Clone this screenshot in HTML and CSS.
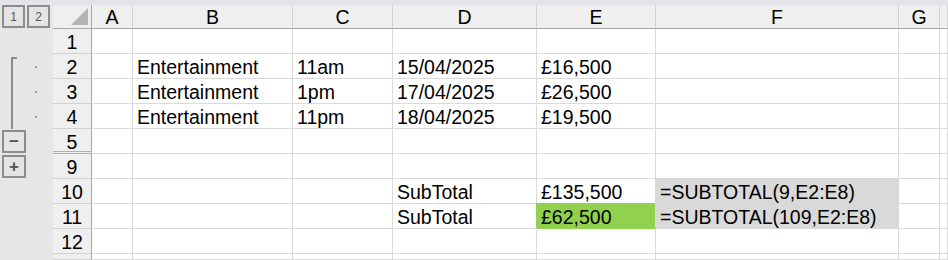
FILE: index.html
```html
<!DOCTYPE html>
<html lang="en">
  <head>
    <meta charset="UTF-8" />
    <meta name="viewport" content="width=device-width, initial-scale=1.0" />
    <title>Subtotal sheet</title>
    <link rel="stylesheet" href="styles.css">
  </head>
  <body>
    <div class="strip"></div>
    <div class="sheet">
      <!-- column headers -->
      <div class="ol ol-top"><span class="lvl">1</span><span class="lvl">2</span></div>
      <div class="corner"></div>
      <div class="ch">A</div>
      <div class="ch">B</div>
      <div class="ch">C</div>
      <div class="ch">D</div>
      <div class="ch">E</div>
      <div class="ch">F</div>
      <div class="ch">G</div>
      <div class="ch"></div>

      <!-- row 1 -->
      <div class="ol"></div>
      <div class="rh">1</div>
      <div class="c"></div><div class="c"></div><div class="c"></div><div class="c"></div>
      <div class="c"></div><div class="c"></div><div class="c"></div><div class="c"></div>

      <!-- row 2 -->
      <div class="ol ol-grp first"><i class="dot"></i></div>
      <div class="rh">2</div>
      <div class="c"></div>
      <div class="c">Entertainment</div>
      <div class="c">11am</div>
      <div class="c">15/04/2025</div>
      <div class="c">£16,500</div>
      <div class="c"></div><div class="c"></div><div class="c"></div>

      <!-- row 3 -->
      <div class="ol ol-grp"><i class="dot"></i></div>
      <div class="rh">3</div>
      <div class="c"></div>
      <div class="c">Entertainment</div>
      <div class="c">1pm</div>
      <div class="c">17/04/2025</div>
      <div class="c">£26,500</div>
      <div class="c"></div><div class="c"></div><div class="c"></div>

      <!-- row 4 -->
      <div class="ol ol-grp"><i class="dot"></i></div>
      <div class="rh">4</div>
      <div class="c"></div>
      <div class="c">Entertainment</div>
      <div class="c">11pm</div>
      <div class="c">18/04/2025</div>
      <div class="c">£19,500</div>
      <div class="c"></div><div class="c"></div><div class="c"></div>

      <!-- row 5 (rows 6-8 hidden) -->
      <div class="ol"><span class="ol-btn">−</span></div>
      <div class="rh hidden-after">5</div>
      <div class="c"></div><div class="c"></div><div class="c"></div><div class="c"></div>
      <div class="c"></div><div class="c"></div><div class="c"></div><div class="c"></div>

      <!-- row 9 -->
      <div class="ol"><span class="ol-btn">+</span></div>
      <div class="rh">9</div>
      <div class="c"></div><div class="c"></div><div class="c"></div><div class="c"></div>
      <div class="c"></div><div class="c"></div><div class="c"></div><div class="c"></div>

      <!-- row 10 -->
      <div class="ol"></div>
      <div class="rh">10</div>
      <div class="c"></div><div class="c"></div><div class="c"></div>
      <div class="c">SubTotal</div>
      <div class="c">£135,500</div>
      <div class="c fill-gray">=SUBTOTAL(9,E2:E8)</div>
      <div class="c"></div><div class="c"></div>

      <!-- row 11 -->
      <div class="ol"></div>
      <div class="rh">11</div>
      <div class="c"></div><div class="c"></div><div class="c"></div>
      <div class="c">SubTotal</div>
      <div class="c fill-green">£62,500</div>
      <div class="c fill-gray">=SUBTOTAL(109,E2:E8)</div>
      <div class="c"></div><div class="c"></div>

      <!-- row 12 -->
      <div class="ol"></div>
      <div class="rh">12</div>
      <div class="c"></div><div class="c"></div><div class="c"></div><div class="c"></div>
      <div class="c"></div><div class="c"></div><div class="c"></div><div class="c"></div>

      <!-- top of row 13, cut by the window -->
      <div class="ol"></div>
      <div class="rh"></div>
      <div class="c"></div><div class="c"></div><div class="c"></div><div class="c"></div>
      <div class="c"></div><div class="c"></div><div class="c"></div><div class="c"></div>
    </div>
  </body>
</html>
```

FILE: styles.css
```css
body {
  margin: 0;
  height: 260px;
  overflow: hidden;
  background: #e6e6e6;
  font-family: "Liberation Sans", Arial, sans-serif;
  font-size: 19.5px;
  color: #000000;
}

.strip {
  height: 5px;
  background: #e4e4e8;
}

.sheet {
  display: grid;
  grid-template-columns: 53px 39px 41px 160px 100px 144px 119px 243px 41px 1fr;
  grid-template-rows: 24px repeat(9, 25px) 6px;
}

/* outline panel on the left */
.ol {
  background: #e6e6e6;
}
.ol-top {
  display: flex;
  gap: 2px;
  padding-left: 2px;
}
.lvl,
.ol-btn {
  box-sizing: border-box;
  display: flex;
  align-items: center;
  justify-content: center;
  border: 2px solid #8c8c8c;
  color: #555555;
  background: #e4e4e4;
}
.lvl {
  width: 23px;
  height: 23px;
  font-size: 12px;
}
.ol-btn {
  width: 24px;
  height: 23px;
  margin: 1px 0 0 2px;
  font-size: 17px;
  font-weight: bold;
  line-height: 1;
}
.ol-grp {
  display: flex;
  align-items: center;
}
.ol-grp::before {
  content: "";
  align-self: stretch;
  width: 0;
  border-left: 2px solid #8c8c8c;
  margin-left: 11px;
  margin-right: 22px;
}
.ol-grp.first::before {
  width: 4px;
  margin-top: 3px;
  margin-right: 18px;
  border-top: 2px solid #8c8c8c;
}
.dot {
  width: 2px;
  height: 2px;
  background: #9a9a9a;
}

/* headers */
.corner {
  position: relative;
  background: #efefef;
  border-right: 1px solid #a8a8a8;
  border-bottom: 1px solid #a8a8a8;
}
.corner::after {
  content: "";
  position: absolute;
  right: 3px;
  bottom: 3px;
  width: 17px;
  height: 17px;
  background: #b4b4b4;
  clip-path: polygon(100% 0, 100% 100%, 0 100%);
}
.ch {
  background: #efefef;
  border-right: 1px solid #d2d2d2;
  border-bottom: 1px solid #a8a8a8;
  text-align: center;
  line-height: 22px;
  padding-top: 1px;
  overflow: hidden;
}
.rh {
  box-sizing: border-box;
  background: #efefef;
  border-right: 1px solid #a8a8a8;
  border-bottom: 1px solid #d2d2d2;
  text-align: center;
  line-height: 22px;
  padding-top: 2px;
}
.rh.hidden-after {
  border-bottom: 3px double #b0b0b0;
}

/* cells */
.c {
  background: #ffffff;
  border-right: 1px solid #dadada;
  border-bottom: 1px solid #dadada;
  padding: 2px 0 0 4px;
  line-height: 22px;
  white-space: nowrap;
}
.fill-gray {
  background: #d9d9d9;
  border-color: #d9d9d9;
  box-shadow: -1px -1px 0 #d9d9d9;
}
.fill-green {
  background: #92d050;
  border-color: #92d050;
  box-shadow: -1px -1px 0 #92d050;
}
```
